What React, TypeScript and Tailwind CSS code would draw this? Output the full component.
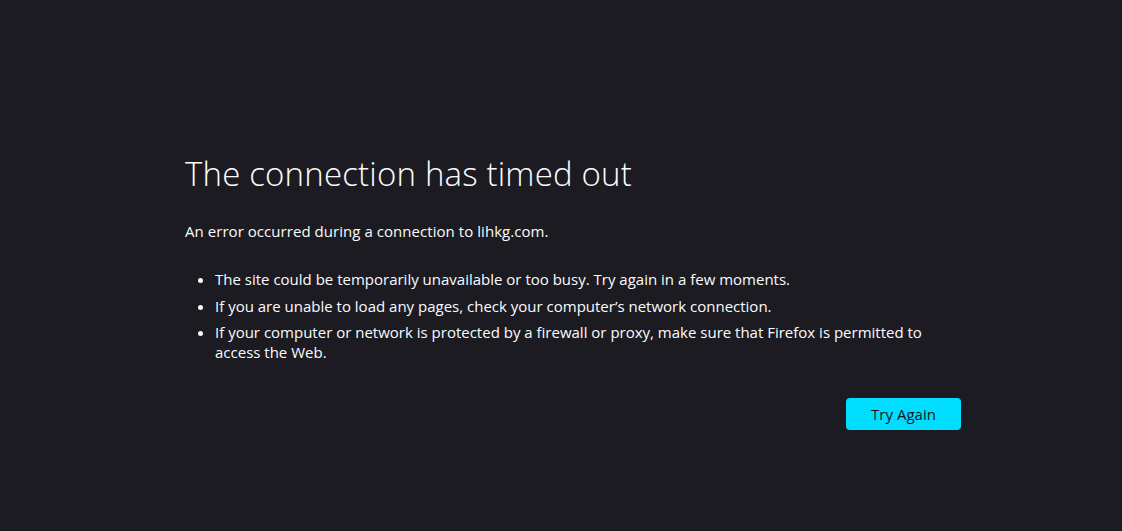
export default function App() {
  return (
    <div
      className="w-full h-[531px] bg-[#1c1b22] text-[#fbfbfe] overflow-hidden"
      style={{ fontFamily: '"Open Sans", "Noto Sans", sans-serif' }}
    >
      <div className="ml-[185px] w-[776px] pt-[152px]">
        <h1 className="text-[33px] leading-[44px] font-light tracking-[0.18px]">
          The connection has timed out
        </h1>
        <p className="mt-[24px] text-[15px] leading-[22px] tracking-[0.05px]">
          An error occurred during a connection to lihkg.com.
        </p>
        <ul className="mt-[28px] pl-[30px] list-disc text-[15px] leading-[19.5px]">
          <li>The site could be temporarily unavailable or too busy. Try again in a few moments.</li>
          <li className="mt-[7px]">If you are unable to load any pages, check your computer’s network connection.</li>
          <li className="mt-[7px]">
            If your computer or network is protected by a firewall or proxy, make sure that Firefox is permitted to access the Web.
          </li>
        </ul>
        <div className="mt-[36px] flex justify-end">
          <button className="h-[32px] w-[115px] rounded-[4px] bg-[#00ddff] text-[#15141a] text-[15px]">
            Try Again
          </button>
        </div>
      </div>
    </div>
  );
}
